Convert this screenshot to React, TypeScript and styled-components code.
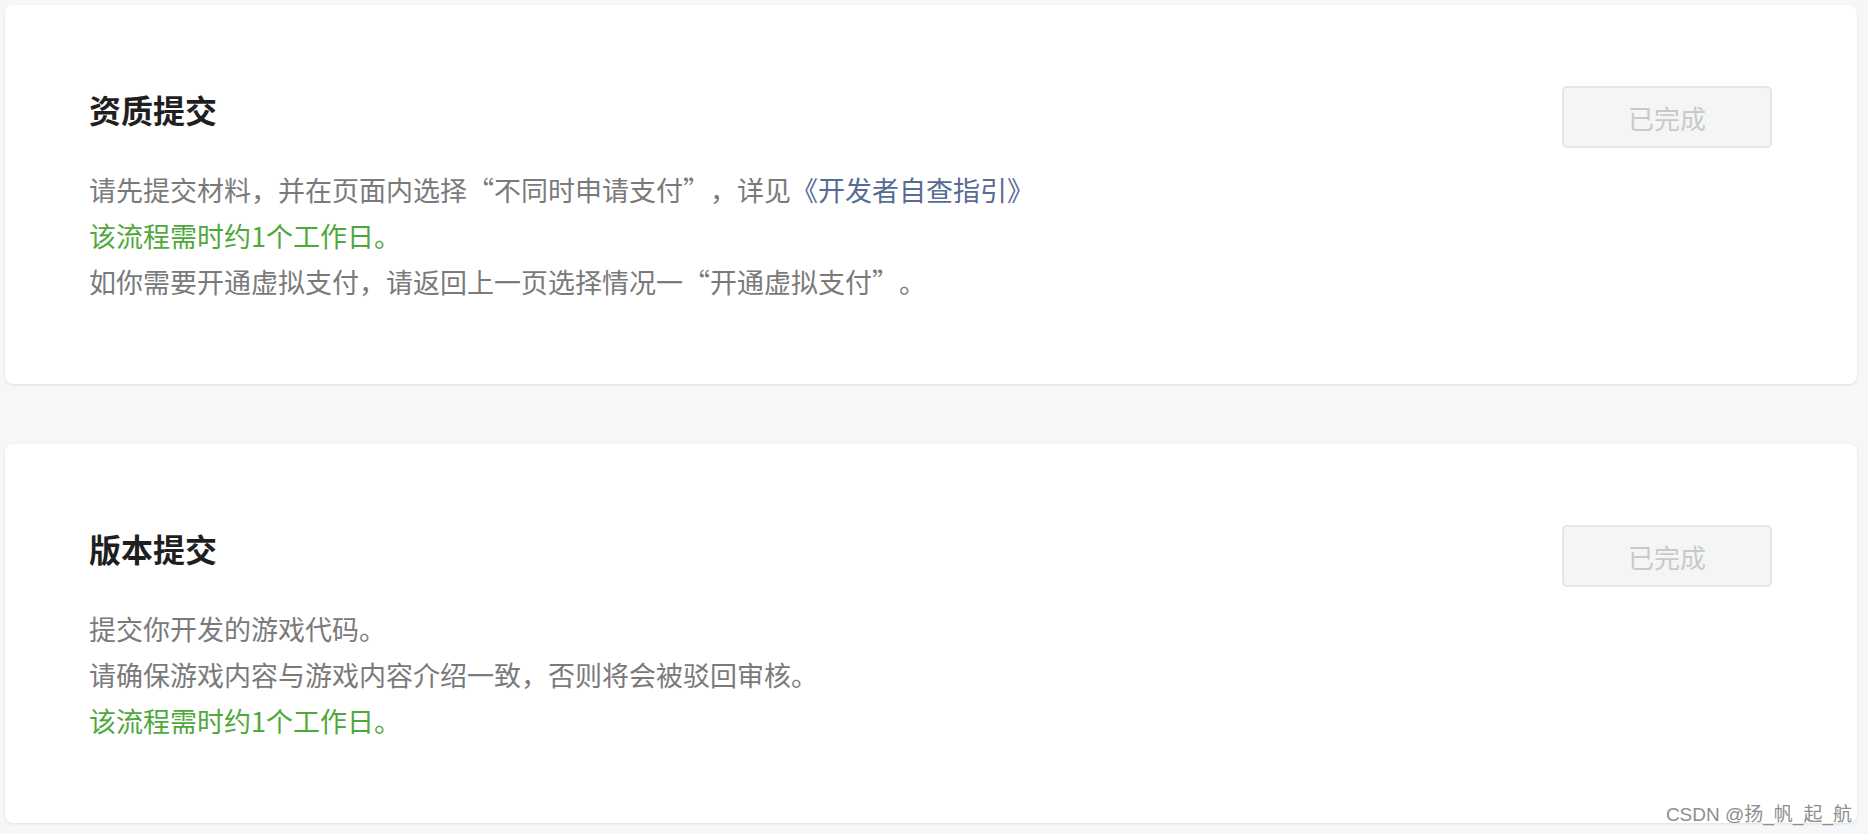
import React from "react";
import styled, { createGlobalStyle } from "styled-components";

const GlobalStyle = createGlobalStyle`
  html, body {
    margin: 0;
    padding: 0;
    background: #f6f7f9;
  }
  body {
    font-family: "Noto Sans CJK SC", "Noto Sans", "Liberation Sans", sans-serif;
    -webkit-font-smoothing: antialiased;
    text-spacing-trim: space-all;
  }
`;

const Page = styled.div`
  position: relative;
  box-sizing: border-box;
  min-height: 834px;
  padding: 5px 11px 11px 5px;
  display: flex;
  flex-direction: column;
  gap: 60px;
  background: #f6f7f9;
`;

const Card = styled.section`
  box-sizing: border-box;
  background: #ffffff;
  border-radius: 8px;
  box-shadow: 0 1px 3px rgba(0, 0, 0, 0.1);
  padding: 81px 85px 79px 84px;
  display: flex;
  justify-content: space-between;
  align-items: flex-start;
`;

const Info = styled.div`
  display: flex;
  flex-direction: column;
`;

const Title = styled.h2`
  margin: 0 0 35px;
  font-size: 32px;
  line-height: 46px;
  font-weight: 700;
  color: #1f1f1f;
`;

const Desc = styled.div`
  display: flex;
  flex-direction: column;
  font-size: 27px;
  line-height: 46px;
  text-spacing-trim: space-all;
`;

const Line = styled.p<{ $tone?: "muted" | "green" }>`
  margin: 0;
  color: ${(p) => (p.$tone === "green" ? "#4fa83c" : "#7a7a7a")};
`;

const Link = styled.a`
  color: #576b95;
  text-decoration: none;
  cursor: pointer;
`;

const DoneButton = styled.button`
  flex: none;
  box-sizing: border-box;
  width: 210px;
  height: 62px;
  border: 2px solid #e4e6e9;
  border-radius: 5px;
  background: #f4f5f5;
  color: #c9c9c9;
  font-family: "Noto Sans CJK SC", "Noto Sans", sans-serif;
  font-size: 26px;
  cursor: not-allowed;
`;

const Watermark = styled.span`
  position: absolute;
  right: 16px;
  bottom: 8px;
  font-size: 19px;
  line-height: 22px;
  color: #8e8e8e;
  text-shadow: 0 0 1px #ffffff, 0 0 1px #ffffff;
  font-family: "Liberation Sans", "Noto Sans CJK SC", sans-serif;
`;

const GREEN = "该流程需时约1个工作日。";

const steps: { title: string; lines: { text: React.ReactNode; tone?: "muted" | "green" }[] }[] = [
  {
    title: "资质提交",
    lines: [
      {
        text: (
          <>
            请先提交材料，并在页面内选择“不同时申请支付”，详见<Link>《开发者自查指引》</Link>
          </>
        ),
      },
      { text: GREEN, tone: "green" },
      { text: "如你需要开通虚拟支付，请返回上一页选择情况一“开通虚拟支付”。" },
    ],
  },
  {
    title: "版本提交",
    lines: [
      { text: "提交你开发的游戏代码。" },
      { text: "请确保游戏内容与游戏内容介绍一致，否则将会被驳回审核。" },
      { text: GREEN, tone: "green" },
    ],
  },
];

export default function App() {
  return (
    <>
      <GlobalStyle />
      <Page>
        {steps.map((s) => (
          <Card key={s.title}>
            <Info>
              <Title>{s.title}</Title>
              <Desc>
                {s.lines.map((l, i) => (
                  <Line key={i} $tone={l.tone}>
                    {l.text}
                  </Line>
                ))}
              </Desc>
            </Info>
            <DoneButton disabled>已完成</DoneButton>
          </Card>
        ))}
        <Watermark>CSDN @扬_帆_起_航</Watermark>
      </Page>
    </>
  );
}
